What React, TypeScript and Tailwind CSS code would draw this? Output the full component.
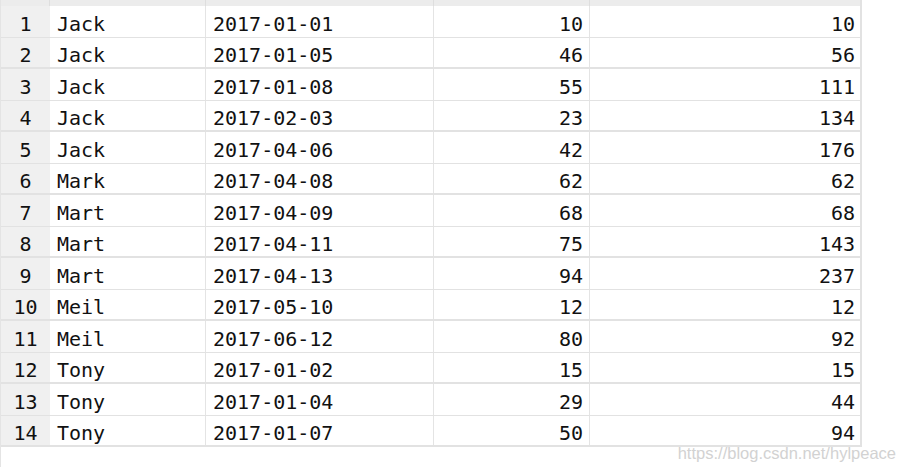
import React from "react";

const rows: [string, string, number, number][] = [
  ["Jack", "2017-01-01", 10, 10],
  ["Jack", "2017-01-05", 46, 56],
  ["Jack", "2017-01-08", 55, 111],
  ["Jack", "2017-02-03", 23, 134],
  ["Jack", "2017-04-06", 42, 176],
  ["Mark", "2017-04-08", 62, 62],
  ["Mart", "2017-04-09", 68, 68],
  ["Mart", "2017-04-11", 75, 143],
  ["Mart", "2017-04-13", 94, 237],
  ["Meil", "2017-05-10", 12, 12],
  ["Meil", "2017-06-12", 80, 92],
  ["Tony", "2017-01-02", 15, 15],
  ["Tony", "2017-01-04", 29, 44],
  ["Tony", "2017-01-07", 50, 94],
];

export default function App() {
  return (
    <div
      className="relative w-[905px] h-[467px] bg-white overflow-hidden text-[#111]"
      style={{ fontFamily: '"DejaVu Sans Mono", "Liberation Mono", monospace' }}
    >
      <div className="flex flex-col w-[862px] h-full border-l border-[#e4e4e4]">
        <div className="grid grid-cols-[49px_156px_228px_156px_270px] h-[6px] bg-[#ececec] border-r-2 border-[#e2e2e2]">
          <div className="border-r border-[#dedede]" />
          <div className="border-r border-[#dedede]" />
          <div className="border-r border-[#dedede]" />
          <div className="border-r border-[#dedede]" />
          <div />
        </div>
        {rows.map((r, i) => {
          const odd = i % 2 === 0;
          const h = odd ? "h-[32px] border-b" : "h-[31px] border-b-2";
          return (
            <div
              key={i}
              className={`grid grid-cols-[49px_156px_228px_156px_270px] text-[20px] leading-none border-r-2 border-[#e2e2e2] ${h}`}
            >
              <div className="flex items-center justify-center pt-[5px] bg-[#f0f0f0]">
                {i + 1}
              </div>
              <div className="flex items-center pt-[5px] pl-[7px] border-r border-[#e4e4e4]">
                {r[0]}
              </div>
              <div className="flex items-center pt-[5px] pl-[7px] border-r border-[#e4e4e4]">
                {r[1]}
              </div>
              <div className="flex items-center justify-end pt-[5px] pr-[6px] border-r border-[#e4e4e4]">
                {r[2]}
              </div>
              <div className="flex items-center justify-end pt-[5px] pr-[5px]">
                {r[3]}
              </div>
            </div>
          );
        })}
      </div>
      <div
        className="absolute right-[9px] top-[441px] text-[16.5px] text-[#d2d2d2]"
        style={{ fontFamily: '"Liberation Sans", Arial, sans-serif' }}
      >
        https://blog.csdn.net/hylpeace
      </div>
    </div>
  );
}
